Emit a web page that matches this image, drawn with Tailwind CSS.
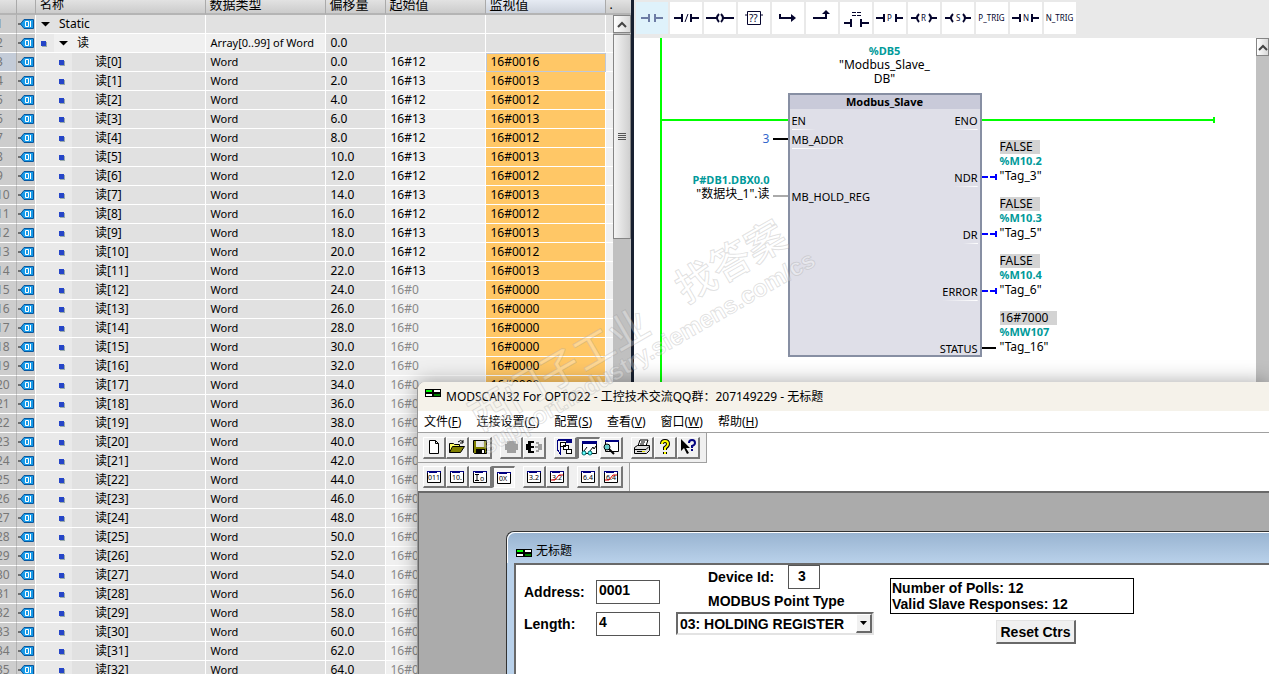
<!DOCTYPE html>
<html lang="zh-CN">
<head>
<meta charset="utf-8">
<title>Modbus Slave</title>
<script src="https://cdn.jsdelivr.net/npm/@tailwindcss/browser@4"></script>
</head>
<body class="relative h-screen overflow-hidden bg-white text-black font-['Noto_Sans','Noto_Sans_CJK_SC',sans-serif]">
<svg class="hidden">
  <symbol id="tag" viewBox="0 0 16 10"><path d="M0 5h3" stroke="#111" /><path d="M2.500 5L6 .5h9.500v9H6z" fill="#189be8" stroke="#07569e"/><path d="M7.500 2.500h3v5h-3zM12.500 2v6" fill="none" stroke="#fff"/></symbol>
  <symbol id="opto" viewBox="0 0 16 8"><path d="M0 0h16v8H0z" fill="#000"/><path d="M1 1h6v2H1z" fill="#0f0"/><path d="M9 1h6v2H9zM1 5h6v2H1z" fill="#fff"/><path d="M9 5h6v2H9z" fill="#008000"/></symbol>
  <symbol id="win" viewBox="0 0 16 14"><path d="M1.500 1.500h13v11h-13z" fill="#fff" stroke="#000"/><path d="M1 1h14v2H1z" fill="#000080"/><path d="M2 2.500h1M11 2.500h3" stroke="#fff"/></symbol>
</svg>

<div class="flex h-full">
  <section class="flex h-full w-[calc(50%-1px)] shrink-0 overflow-hidden border-r-3 border-[#182030]">
    <div class="min-w-0 flex-1 overflow-hidden">
      <table class="w-full table-fixed border-separate border-spacing-0 text-[12px] leading-[18px] whitespace-nowrap">
        <colgroup><col class="w-[17px]"><col class="w-[19px]"><col><col class="w-[120px]"><col class="w-[60px]"><col class="w-[100px]"><col class="w-[120px]"><col class="w-[7px]"></colgroup>
        <thead>
          <tr class="bg-linear-to-b from-[#e2e2e2] to-[#c8c8c8] text-left">
            <th class="h-[15px] border-r border-b-2 border-r-[#aaa] border-b-[#b4b4b4] p-0"></th>
            <th class="border-r border-b-2 border-r-[#aaa] border-b-[#b4b4b4] p-0"></th>
            <th class="border-r border-b-2 border-r-[#aaa] border-b-[#b4b4b4] p-0 pl-1 font-normal"><div class="flex h-[13px] items-end leading-[17px]">名称</div></th>
            <th class="border-r border-b-2 border-r-[#aaa] border-b-[#b4b4b4] p-0 pl-1 font-normal"><div class="flex h-[13px] items-end text-[13px] leading-[17px]">数据类型</div></th>
            <th class="border-r border-b-2 border-r-[#aaa] border-b-[#b4b4b4] p-0 pl-1 font-normal"><div class="flex h-[13px] items-end text-[13px] leading-[17px]">偏移量</div></th>
            <th class="border-r border-b-2 border-r-[#aaa] border-b-[#b4b4b4] p-0 pl-1 font-normal"><div class="flex h-[13px] items-end text-[13px] leading-[17px]">起始值</div></th>
            <th class="border-r border-b-2 border-r-[#aaa] border-b-[#b4b4b4] bg-linear-to-b from-[#e6ebf3] to-[#ccd2dc] p-0 pl-1 font-normal"><div class="flex h-[13px] items-end text-[13px] leading-[17px]">监视值</div></th>
            <th class="overflow-hidden border-b-2 border-b-[#b4b4b4] p-0 pl-1 font-normal"><div class="flex h-[13px] items-end leading-[17px]">.</div></th>
          </tr>
        </thead>
        <tbody id="rows"></tbody>
      </table>
    </div>
    <div class="flex w-[18px] shrink-0 flex-col bg-[#c0c0c0]">
      <div class="h-[15px] border-b-2 border-[#b4b4b4] bg-linear-to-b from-[#e2e2e2] to-[#c8c8c8]"></div>
      <button aria-label="向上滚动" class="flex h-[18px] items-center justify-center border border-[#858585] bg-linear-to-r from-white to-[#d8d8d8]"><svg class="h-[7px] w-[10px]" viewBox="0 0 10 7"><path d="M1 6l4-4 4 4" fill="none" stroke="#444" stroke-width="2"/></svg></button>
      <div class="mt-px flex h-[205px] items-center justify-center border border-[#858585] bg-linear-to-r from-[#f4f4f4] to-[#cfcfcf]"><svg class="h-[8px] w-[8px]" viewBox="0 0 8 8" shape-rendering="crispEdges"><path d="M0 .5h8M0 2.500h8M0 4.500h8M0 6.500h8" stroke="#555"/></svg></div>
    </div>
  </section>

  <section class="flex min-w-0 flex-1 flex-col">
    <div class="flex h-[38px] shrink-0 gap-[2px] bg-[#e9e9e9] px-[2px] pt-[2px] text-[8px] text-[#05052d]">
      <button aria-label="常开触点" class="flex size-[32px] items-center justify-center bg-[#dff2fb]"><svg class="size-[32px]" shape-rendering="crispEdges" stroke="#6d7ca5" stroke-width="2"><path d="M5 16h8M19 16h8M13 12v8M19 12v8"/></svg></button>
      <button aria-label="常闭触点" class="size-[32px] bg-white"><svg class="size-[32px]" stroke="#05052d" stroke-width="2"><path d="M4 16h8M21 16h8M12 12v8M21 12v8"/><path d="M15 20l3-8" stroke-width="1"/></svg></button>
      <button aria-label="线圈" class="size-[32px] bg-white"><svg class="size-[32px]" fill="none" stroke="#05052d" stroke-width="2"><path d="M2 16h11M19 16h11"/><path d="M15 12q-4 4 0 8M17 12q4 4 0 8"/></svg></button>
      <button aria-label="空功能框" class="size-[32px] bg-white"><svg class="size-[32px]" fill="none" stroke="#05052d" stroke-width="1"><path d="M9.500 9.500h13v13h-13zM7 13h3M22 13h3"/><text x="11" y="20" font-size="10" fill="#05052d" stroke="none">??</text></svg></button>
      <button aria-label="打开分支" class="size-[32px] bg-white"><svg class="size-[32px]" fill="none" stroke="#05052d" stroke-width="2"><path d="M8 12v4h12"/><path d="M19 12l5 4-5 4z" fill="#05052d" stroke="none"/></svg></button>
      <button aria-label="关闭分支" class="size-[32px] bg-white"><svg class="size-[32px]" fill="none" stroke="#05052d" stroke-width="2"><path d="M7 16h13v-5"/><path d="M16 12l4-4 4 4z" fill="#05052d" stroke="none"/></svg></button>
      <button aria-label="等于" class="size-[32px] bg-white"><svg class="size-[32px]" fill="none" stroke="#05052d" stroke-width="2"><path d="M4 21h7M21 21h8M11 17v8M21 17v8"/><path d="M12 10.500h4M17 10.500h4M12 13.500h4M17 13.500h4" stroke-width="1"/></svg></button>
      <button aria-label="P触点" class="size-[32px] bg-white"><svg class="size-[32px]" stroke="#05052d" stroke-width="2"><path d="M2 16h8M22 16h7M10 12v8M22 12v8"/><text x="13" y="19" font-size="8" fill="#05052d" stroke="none">P</text></svg></button>
      <button aria-label="复位线圈" class="size-[32px] bg-white"><svg class="size-[32px]" fill="none" stroke="#05052d" stroke-width="2"><path d="M3 16h6M23 16h6M11 12q-4 4 0 8M21 12q4 4 0 8"/><text x="13" y="19" font-size="8" fill="#05052d" stroke="none">R</text></svg></button>
      <button aria-label="置位线圈" class="size-[32px] bg-white"><svg class="size-[32px]" fill="none" stroke="#05052d" stroke-width="2"><path d="M3 16h6M23 16h6M11 12q-4 4 0 8M21 12q4 4 0 8"/><text x="14" y="19" font-size="8" fill="#05052d" stroke="none">S</text></svg></button>
      <button class="size-[32px] bg-white">P_TRIG</button>
      <button aria-label="N触点" class="size-[32px] bg-white"><svg class="size-[32px]" stroke="#05052d" stroke-width="2"><path d="M2 16h8M22 16h7M10 12v8M22 12v8"/><text x="13" y="19" font-size="8" fill="#05052d" stroke="none">N</text></svg></button>
      <button class="size-[32px] bg-white">N_TRIG</button>
    </div>
    <div class="flex min-h-0 flex-1">
      <div class="relative min-w-0 flex-1 overflow-hidden text-[12px] leading-[14px] whitespace-nowrap">
        <svg class="absolute inset-0 h-full w-full" shape-rendering="crispEdges" fill="none" stroke-width="2">
          <path d="M27 0v640M27 82h128M348 82h232M580 79v6" stroke="#0f0"/>
          <path d="M139 101h15M348 310h14" stroke="#000"/><path d="M139 158h15" stroke="#aaa"/>
          <path d="M348 139h6M356 139h6M362 136v6M348 196h6M356 196h6M362 193v6M348 253h6M356 253h6M362 250v6" stroke="#00f"/>
        </svg>
        <div class="absolute top-[6px] left-[154px] w-[194px] text-center"><b class="text-[11px] text-[#009a9a]">%DB5</b><br>"Modbus_Slave_<br>DB"</div>
        <div class="absolute top-[55px] left-[154px] flex w-[194px] flex-col border-2 border-[#878fa3] bg-[#dfdfe8] text-[11px]">
          <div class="h-[14px] bg-[#c9cad9] text-center font-bold">Modbus_Slave</div>
          <div class="flex h-[246px] justify-between px-[2px] pt-[2px] leading-[19px]">
            <div>
              <div class="h-[19px] bg-linear-to-r from-white to-transparent bg-[length:24px_1px] bg-bottom-left bg-no-repeat">EN</div>
              <div class="h-[19px] bg-linear-to-r from-white to-transparent bg-[length:60px_1px] bg-bottom-left bg-no-repeat">MB_ADDR</div>
              <div class="mt-[38px]">MB_HOLD_REG</div>
            </div>
            <div class="flex flex-col items-end gap-[38px]">
              <div class="h-[19px] bg-linear-to-l from-white to-transparent bg-[length:100%_1px] bg-bottom bg-no-repeat">ENO</div>
              <div class="h-[19px] bg-linear-to-l from-white to-transparent bg-[length:100%_1px] bg-bottom bg-no-repeat">NDR</div>
              <div class="h-[19px] bg-linear-to-l from-white to-transparent bg-[length:100%_1px] bg-bottom bg-no-repeat">DR</div>
              <div class="h-[19px] bg-linear-to-l from-white to-transparent bg-[length:100%_1px] bg-bottom bg-no-repeat">ERROR</div>
              <div class="h-[19px]">STATUS</div>
            </div>
          </div>
        </div>
        <div class="absolute top-[94px] left-[129px] text-[#3366cc]">3</div>
        <div class="absolute top-[135px] left-[36px] w-[100px] text-right"><b class="text-[11px] text-[#009a9a]">P#DB1.DBX0.0</b><br>"数据块_1".读</div>
        <div class="absolute top-[102px] left-[366px]"><span class="block w-[40px] bg-[#d3d3d3]">FALSE</span><b class="block text-[11px] text-[#009a9a]">%M10.2</b><span class="block leading-4">"Tag_3"</span></div>
        <div class="absolute top-[159px] left-[366px]"><span class="block w-[40px] bg-[#d3d3d3]">FALSE</span><b class="block text-[11px] text-[#009a9a]">%M10.3</b><span class="block leading-4">"Tag_5"</span></div>
        <div class="absolute top-[216px] left-[366px]"><span class="block w-[40px] bg-[#d3d3d3]">FALSE</span><b class="block text-[11px] text-[#009a9a]">%M10.4</b><span class="block leading-4">"Tag_6"</span></div>
        <div class="absolute top-[273px] left-[366px]"><span class="block w-[57px] bg-[#d3d3d3]">16#7000</span><b class="block text-[11px] text-[#009a9a]">%MW107</b><span class="block leading-4">"Tag_16"</span></div>
      </div>
      <div class="w-[13px] shrink-0 bg-[#c1c1c1]"><button aria-label="向上滚动" class="flex h-[18px] w-full items-center justify-center border border-[#858585] bg-linear-to-r from-white to-[#d8d8d8]"><svg class="h-[7px] w-[10px]" viewBox="0 0 10 7"><path d="M1 6l4-4 4 4" fill="none" stroke="#444" stroke-width="2"/></svg></button></div>
    </div>
  </section>
</div>

<!-- ModScan window floating over the editor -->
<main class="absolute top-[382px] right-0 bottom-0 left-[417px] flex flex-col overflow-hidden rounded-tl-lg border-l border-[#999] bg-white text-[12px] shadow-[0_0_20px_rgba(0,0,0,0.35)]">
  <header class="flex h-[29px] shrink-0 items-center gap-[5px] bg-[#f5f2ea] pl-[7px]"><svg class="mb-[8px] h-[8px] w-[16px]"><use href="#opto"/></svg><h1>MODSCAN32 For OPTO22 - 工控技术交流QQ群：207149229 - 无标题</h1></header>
  <nav class="flex h-[22px] shrink-0 items-center gap-[15px] border-b border-[#a0a0a0] pl-[6px]">
    <button>文件(<u>F</u>)</button><button>连接设置(<u>C</u>)</button><button>配置(<u>S</u>)</button><button>查看(<u>V</u>)</button><button>窗口(<u>W</u>)</button><button>帮助(<u>H</u>)</button>
  </nav>
  <div class="flex h-[30px] w-[289px] shrink-0 items-center gap-2 border-r border-b border-[#a0a0a0] bg-[#f0f0f0] pl-[5px]">
    <div class="flex">
      <button aria-label="新建" class="flex h-[22px] w-[23px] items-center justify-center border-r-2 border-b-2 border-[#777] border-t-white border-l-white border-t border-l"><svg class="h-[16px] w-[16px]"><path d="M3.500 1.500h6l3 3v10h-9zM9.500 1.500v3h3" fill="#fff" stroke="#000"/></svg></button>
      <button aria-label="打开" class="flex h-[22px] w-[23px] items-center justify-center border-r-2 border-b-2 border-[#777] border-t-white border-l-white border-t border-l"><svg class="h-[16px] w-[16px]"><path d="M.5 13.500v-9h4l1 1h5v2" fill="#ff6" stroke="#000"/><path d="M.5 13.500l3-6h12l-4 6z" fill="#808000" stroke="#000"/><path d="M9 3q3-3 5 0m0-2v3h-3" fill="none" stroke="#000"/></svg></button>
      <button aria-label="保存" class="flex h-[22px] w-[23px] items-center justify-center border-r-2 border-b-2 border-[#777] border-t-white border-l-white border-t border-l"><svg class="h-[16px] w-[16px]"><path d="M1.500 1.500h13v13h-12l-1-1z" fill="#808000" stroke="#000"/><path d="M4 2h8v6H4z" fill="#e8e8e8"/><path d="M4 10h9v5H4z" fill="#000"/><path d="M10 11h2v3h-2z" fill="#fff"/></svg></button>
    </div>
    <div class="flex">
      <button aria-label="连接" class="flex h-[22px] w-[23px] items-center justify-center border-r-2 border-b-2 border-[#777] border-t-white border-l-white border-t border-l"><svg class="h-[16px] w-[16px]"><path d="M4 2h9v3h2v6h-2v3H4v-3H2V5h2z" fill="#a0a0a0"/></svg></button>
      <button aria-label="断开" class="flex h-[22px] w-[23px] items-center justify-center border-r-2 border-b-2 border-[#777] border-t-white border-l-white border-t border-l"><svg class="h-[16px] w-[16px]"><path d="M2 2h6v2H5v3h3v2H5v3h3v2H2v-3H0V5h2z" fill="#000"/><path d="M10 3h3v2h3v6h-3v2h-3v-2h2V9H9V7h3V5h-2z" fill="#a0a0a0"/></svg></button>
    </div>
    <div class="flex">
      <button aria-label="数据定义" class="flex h-[22px] w-[23px] items-center justify-center border-r-2 border-b-2 border-[#777] border-t-white border-l-white border-t border-l"><svg class="h-[16px] w-[16px]" shape-rendering="crispEdges"><path d="M1 1h14M9 3h6" stroke="#000080" stroke-width="2"/><path d="M.5 1v10l3 4V8" fill="none" stroke="#000080"/><path d="M3.500 3.500h5v4h-5zM6.500 6.500h5v4h-5zM9.500 10.500h5v4h-5z" fill="#fff" stroke="#000"/></svg></button>
      <button aria-label="显示数据" class="flex h-[22px] w-[23px] items-center justify-center border-t-2 border-l-2 border-[#777] border-r-white border-b-white border-r border-b bg-[#f8f8f8]"><svg class="h-[16px] w-[16px]"><path d="M1.500 1.500h14v12h-14z" fill="#fff" stroke="#000"/><path d="M1 1h15v3H1z" fill="#000080"/><path d="M3 11l3-4M9 11l3-4 1 2 2-3" fill="none" stroke="#000"/><circle cx="3" cy="13" r="2" fill="#6ff" stroke="#066"/><circle cx="9" cy="13" r="2" fill="#6ff" stroke="#066"/></svg></button>
      <button aria-label="显示通信" class="flex h-[22px] w-[23px] items-center justify-center border-r-2 border-b-2 border-[#777] border-t-white border-l-white border-t border-l"><svg class="h-[16px] w-[16px]"><path d="M2.500 1.500h13v11h-13z" fill="#fff" stroke="#000"/><path d="M2 1h14v2H2z" fill="#000080"/><circle cx="4" cy="8" r="3" fill="#6cc" stroke="#000"/><path d="M6 10l5 5" stroke="#000" stroke-width="2"/></svg></button>
    </div>
    <div class="flex">
      <button aria-label="打印" class="flex h-[22px] w-[23px] items-center justify-center border-r-2 border-b-2 border-[#777] border-t-white border-l-white border-t border-l"><svg class="h-[16px] w-[16px]"><path d="M4 7l2-6h8l-2 6" fill="#fff" stroke="#000"/><path d="M.5 8.500l3-2h12v5l-3 3H.5z" fill="#ddd" stroke="#000"/><path d="M1 10.500h11l3-3M3 12.500h6M7 3h4M6 5h4" stroke="#000" fill="none"/><path d="M8 12.500h3" stroke="#dd0"/></svg></button>
      <button aria-label="关于" class="flex h-[22px] w-[23px] items-center justify-center border-r-2 border-b-2 border-[#777] border-t-white border-l-white border-t border-l"><svg class="h-[16px] w-[16px]" fill="none"><path d="M5 5q0-3 3-3t3 3q0 2-3 4v2M8 13v2" stroke="#000" stroke-width="4"/><path d="M5 5q0-3 3-3t3 3q0 2-3 4v2M8 13v2" stroke="#ff0" stroke-width="2"/></svg></button>
      <button aria-label="上下文帮助" class="flex h-[22px] w-[23px] items-center justify-center border-r-2 border-b-2 border-[#777] border-t-white border-l-white border-t border-l"><svg class="h-[16px] w-[16px]" fill="none"><path d="M1 0v12l3-3 3 6 2-1-3-5h4z" fill="#000"/><path d="M9 4q0-3 3-3t3 3q0 2-3 3v2M12 10v2" stroke="#000080" stroke-width="2"/></svg></button>
    </div>
  </div>
  <div class="flex h-[28px] w-[212px] shrink-0 items-center gap-2 border-r border-[#a0a0a0] bg-[#f0f0f0] pl-[5px]">
    <div class="flex">
      <button aria-label="二进制" class="flex h-[22px] w-[23px] items-center justify-center border-r-2 border-b-2 border-[#777] border-t-white border-l-white border-t border-l"><svg class="h-[14px] w-[16px]"><use href="#win"/><text x="2" y="10" font-size="7">011</text></svg></button>
      <button aria-label="十进制" class="flex h-[22px] w-[23px] items-center justify-center border-r-2 border-b-2 border-[#777] border-t-white border-l-white border-t border-l"><svg class="h-[14px] w-[16px]"><use href="#win"/><text x="3" y="10" font-size="7">10.</text></svg></button>
      <button aria-label="整数" class="flex h-[22px] w-[23px] items-center justify-center border-r-2 border-b-2 border-[#777] border-t-white border-l-white border-t border-l"><svg class="h-[14px] w-[16px]"><use href="#win"/><path d="M3 4.500h4M5 5v5M3 10.500h4" stroke="#000"/><text x="8" y="11" font-size="7">o</text></svg></button>
      <button aria-label="十六进制" class="flex h-[22px] w-[23px] items-center justify-center border-t-2 border-l-2 border-[#777] border-r-white border-b-white border-r border-b bg-[#f8f8f8]"><svg class="h-[14px] w-[16px]"><use href="#win"/><text x="3" y="10" font-size="7">0X</text></svg></button>
    </div>
    <div class="flex">
      <button aria-label="32位浮点" class="flex h-[22px] w-[23px] items-center justify-center border-r-2 border-b-2 border-[#777] border-t-white border-l-white border-t border-l"><svg class="h-[14px] w-[16px]"><use href="#win"/><text x="3" y="10" font-size="7">3.2</text></svg></button>
      <button aria-label="32位浮点交换" class="flex h-[22px] w-[23px] items-center justify-center border-r-2 border-b-2 border-[#777] border-t-white border-l-white border-t border-l"><svg class="h-[14px] w-[16px]"><use href="#win"/><text x="3" y="10" font-size="7">3.2</text><path d="M2 10h4l4-5h4" fill="none" stroke="#d00"/></svg></button>
    </div>
    <div class="flex">
      <button aria-label="64位浮点" class="flex h-[22px] w-[23px] items-center justify-center border-r-2 border-b-2 border-[#777] border-t-white border-l-white border-t border-l"><svg class="h-[14px] w-[16px]"><use href="#win"/><text x="3" y="10" font-size="7">6.4</text></svg></button>
      <button aria-label="64位浮点交换" class="flex h-[22px] w-[23px] items-center justify-center border-r-2 border-b-2 border-[#777] border-t-white border-l-white border-t border-l"><svg class="h-[14px] w-[16px]"><use href="#win"/><text x="3" y="10" font-size="7">6.4</text><path d="M2 10h4l4-5h4" fill="none" stroke="#d00"/></svg></button>
    </div>
  </div>
  <div class="relative flex-1 overflow-hidden border-t-2 border-l border-[#696969] bg-[#ababab]">
    <div class="absolute top-[38px] right-0 bottom-0 left-[87px] flex flex-col rounded-tl-lg border-t border-l border-[#333] bg-[#b9d1ea] pl-[7px]">
      <div class="-ml-[7px] flex h-[31px] shrink-0 items-end gap-1 rounded-tl-lg border-t border-l border-white bg-linear-to-b from-[#99b4d1] to-[#b9d1ea] pb-[4px] pl-[8px] leading-[16px]"><svg class="mb-[2px] h-[8px] w-[16px]"><use href="#opto"/></svg>无标题</div>
      <form class="flex flex-1 items-start border-t-2 border-l-2 border-[#696969] bg-white font-['Liberation_Sans',sans-serif] text-[14px] leading-[16px] font-bold whitespace-nowrap">
        <div class="mt-[15px] ml-[8px] grid grid-cols-[72px_64px] gap-y-2">
          <label for="addr" class="self-center">Address:</label><input id="addr" value="0001" class="h-[24px] w-full border border-[#555] px-[2px] pb-[4px]">
          <label for="len" class="self-center">Length:</label><input id="len" value="4" class="h-[24px] w-full border border-[#555] px-[2px] pb-[4px]">
        </div>
        <div class="ml-[16px] flex w-[198px] flex-col">
          <div class="ml-[32px] flex items-center"><label for="dev" class="w-[80px]">Device Id:</label><input id="dev" value="3" class="h-[24px] w-[32px] border border-[#555] pr-[4px] pb-[2px] text-center"></div>
          <label for="ptype" class="mt-[4px] ml-[32px]">MODBUS Point Type</label>
          <div class="relative mt-[3px]">
            <select id="ptype" class="h-[23px] w-full appearance-none border-2 border-[#696969] border-r-[#e3e3e3] border-b-[#e3e3e3] pl-[2px]"><option>03: HOLDING REGISTER</option></select>
            <span class="pointer-events-none absolute top-[2px] right-[2px] flex h-[19px] w-[16px] items-center justify-center border-t border-r-2 border-b-2 border-l border-[#696969] border-t-white border-l-white bg-[#f0f0f0]"><svg class="h-[4px] w-[7px]"><path d="M0 0h7L3.500 4z"/></svg></span>
          </div>
        </div>
        <div class="mt-[13px] ml-[16px] flex w-[244px] flex-col items-center">
          <div class="w-full border border-black px-px py-px">Number of Polls: 12<br>Valid Slave Responses: 12</div>
          <button type="button" class="mt-[6px] ml-[48px] h-[24px] w-[80px] border-t border-r-2 border-b-2 border-l border-[#696969] border-t-[#e3e3e3] border-l-[#e3e3e3] bg-[#f0f0f0]">Reset Ctrs</button>
        </div>
      </form>
    </div>
  </div>
</main>

<svg class="pointer-events-none absolute inset-0 h-full w-full font-['Liberation_Sans','Noto_Sans_CJK_SC',sans-serif]" fill="#fff" fill-opacity=".3" stroke="#888" stroke-opacity=".25" stroke-width="1">
  <text transform="translate(480 432) rotate(-30)" font-size="40" font-weight="500">西门子工业</text>
  <text transform="translate(686 304) rotate(-30)" font-size="40" font-weight="500">找答案</text>
  <text transform="translate(487 455) rotate(-30)" font-size="24" font-weight="bold">support.industry.siemens.com/cs</text>
</svg>

<script>
const icon = '<svg class="h-[12px] w-[16px]"><use href="#tag"/></svg>';
const dot = '<i class="block size-[5px] bg-[#2545c8] shadow-[1px_1px_0_#9aa]"></i>';
const tri = '<svg class="h-[5px] w-[9px]"><path d="M0 0h9L4.500 4.500z"/></svg>';
let html = '';
for (let n = 1; n <= 36; n++) {
  const i = n - 3;
  const name = n === 1 ? `<div class="flex h-[18px] items-center gap-[9px] bg-[#e1e1e1] pl-[5px]">${tri}Static</div>`
    : n === 2 ? `<div class="flex h-[18px] bg-[#f0f0f0]"><span class="flex w-[18px] items-center bg-[#e9e9e9] pl-[5px]">${dot}</span><span class="flex items-center gap-[9px] pl-[5px]">${tri}读</span></div>`
    : `<div class="flex h-[18px] bg-[#e1e1e1]"><span class="flex w-[36px] items-center bg-[#e9e9e9] pl-[23px]">${dot}</span><span class="pl-[23px]">读[${i}]</span></div>`;
  const start = i < 0 ? '' : i < 12 ? (i % 2 ? '16#13' : '16#12') : '16#0';
  const mon = i < 0 ? '' : i === 0 ? '16#0016' : i < 12 ? (i % 2 ? '16#0013' : '16#0012') : '16#0000';
  html += `<tr>
    <td class="h-[19px] border-r border-b border-r-[#b0b0b0] border-b-white p-0 text-[#777] ${n === 3 ? 'bg-[#c4ccd8]' : 'bg-[#cdcdcd]'}"><div class="-ml-1">${n}</div></td>
    <td class="border-r border-b border-white bg-[#cdcdcd] p-0 pl-[1px]"><div class="flex items-center">${icon}</div></td>
    <td class="overflow-hidden border-r border-b border-white p-0">${name}</td>
    <td class="border-r border-b border-white p-0 pl-[5px] text-[11px] ${n === 2 ? 'bg-[#f0f0f0]' : 'bg-[#e1e1e1]'}">${n === 1 ? '' : n === 2 ? 'Array[0..99] of Word' : 'Word'}</td>
    <td class="border-r border-b border-white bg-[#e1e1e1] p-0 pl-[5px]">${n === 1 ? '' : n === 2 ? '0.0' : (i * 2).toFixed(1)}</td>
    <td class="border-r border-b border-white p-0 pl-[5px] ${i < 0 ? 'bg-[#e1e1e1]' : 'bg-[#f0f0f0]'} ${i >= 12 ? 'text-[#888]' : 'text-black'}">${start}</td>
    <td class="border-r border-b border-white p-0 pl-[5px] ${i < 0 ? 'bg-[#e1e1e1]' : 'bg-[#ffc766]'} ${i === 0 ? 'outline -outline-offset-1 outline-[#c0c8d8]' : ''}">${mon}</td>
    <td class="border-b border-white p-0 ${n === 1 ? 'bg-[#e1e1e1]' : 'bg-[#f0f0f0]'}"></td></tr>`;
}
document.getElementById('rows').innerHTML = html;
</script>
</body>
</html>
